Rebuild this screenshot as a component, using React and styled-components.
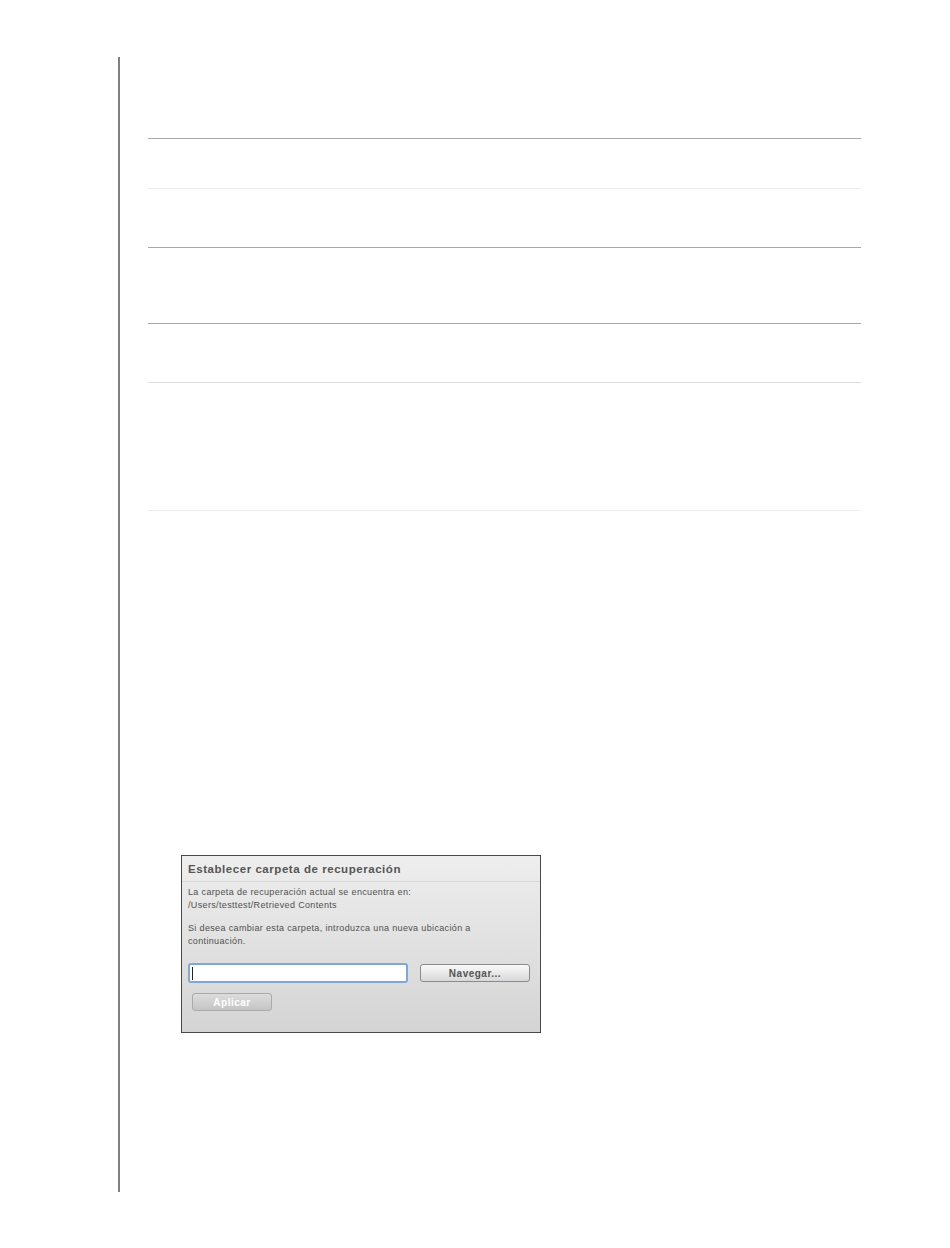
import styled, { createGlobalStyle } from "styled-components";

const GlobalStyle = createGlobalStyle`
  body {
    margin: 0;
    background: #ffffff;
    font-family: "Liberation Sans", Arial, sans-serif;
  }
`;

const Page = styled.div`
  width: 950px;
  height: 1248px;
  padding-top: 57px;
  box-sizing: border-box;
`;

const Frame = styled.div`
  margin-left: 118px;
  height: 1135px;
  border-left: 2px solid #808080;
  padding-left: 28px;
  padding-top: 81px;
  box-sizing: border-box;
`;

const Table = styled.div`
  width: 713px;
  display: flex;
  flex-direction: column;
`;

const Row = styled.div`
  height: ${(p) => p.$h}px;
  border-top: 1px solid ${(p) => (p.$light ? p.$light : "#a8a8a8")};
  box-sizing: border-box;
`;

const Dialog = styled.div`
  margin-top: 344px;
  margin-left: 33px;
  width: 360px;
  height: 178px;
  box-sizing: border-box;
  border: 1px solid #4a4a4a;
  background: linear-gradient(#eeeeee, #d4d4d4);
  color: #555;
  display: flex;
  flex-direction: column;
`;

const Title = styled.div`
  font-size: 11.5px;
  line-height: 14px;
  font-weight: bold;
  color: #555;
  padding: 6px 6px 5px;
  border-bottom: 1px solid #d8d8d8;
  letter-spacing: 0.55px;
`;

const Body = styled.div`
  padding: 4px 6px 0;
  display: flex;
  flex-direction: column;
  gap: 10px;
`;

const Para = styled.p`
  margin: 0;
  font-size: 9px;
  line-height: 13px;
  letter-spacing: 0.35px;
  color: #505050;
`;

const InputRow = styled.div`
  display: flex;
  align-items: flex-start;
  gap: 12px;
  margin-top: 11px;
`;

const Field = styled.div`
  width: 220px;
  height: 20px;
  box-sizing: border-box;
  border: 2px solid #7ea8d8;
  border-radius: 3px;
  background: #fff;
  padding: 2px 2px;
  display: flex;
  flex-shrink: 0;
`;

const Caret = styled.span`
  width: 1px;
  height: 13px;
  background: #222;
`;

const Button = styled.div`
  width: ${(p) => p.$w}px;
  height: 18px;
  box-sizing: border-box;
  border: 1px solid ${(p) => (p.$disabled ? "#aaa" : "#8a8a8a")};
  border-radius: 3px;
  background: ${(p) =>
    p.$disabled
      ? "linear-gradient(#dcdcdc, #c4c4c4)"
      : "linear-gradient(#fafafa, #d8d8d8)"};
  color: ${(p) => (p.$disabled ? "#ffffff" : "#555")};
  font-size: 10px;
  font-weight: bold;
  letter-spacing: 0.5px;
  display: flex;
  align-items: center;
  justify-content: center;
  margin-left: ${(p) => p.$ml || 0}px;
  margin-top: ${(p) => p.$mt || 0}px;
`;

const rows = [
  { h: 50 },
  { h: 59, light: "#ececec" },
  { h: 76 },
  { h: 59 },
  { h: 128, light: "#dcdcdc" },
  { h: 1, light: "#ececec" },
];

export default function App() {
  return (
    <Page>
      <GlobalStyle />
      <Frame>
        <Table>
          {rows.map((r, i) => (
            <Row key={i} $h={r.h} $light={r.light} />
          ))}
        </Table>
        <Dialog>
          <Title>Establecer carpeta de recuperación</Title>
          <Body>
            <Para>
              La carpeta de recuperación actual se encuentra en:
              <br />
              /Users/testtest/Retrieved Contents
            </Para>
            <Para>
              Si desea cambiar esta carpeta, introduzca una nueva ubicación a
              <br />
              continuación.
            </Para>
          </Body>
          <Body>
            <InputRow>
              <Field>
                <Caret />
              </Field>
              <Button $w={110} $mt={1}>Navegar...</Button>
            </InputRow>
          </Body>
          <Body>
            <Button $w={80} $ml={4} $mt={6} $disabled>
              Aplicar
            </Button>
          </Body>
        </Dialog>
      </Frame>
    </Page>
  );
}
